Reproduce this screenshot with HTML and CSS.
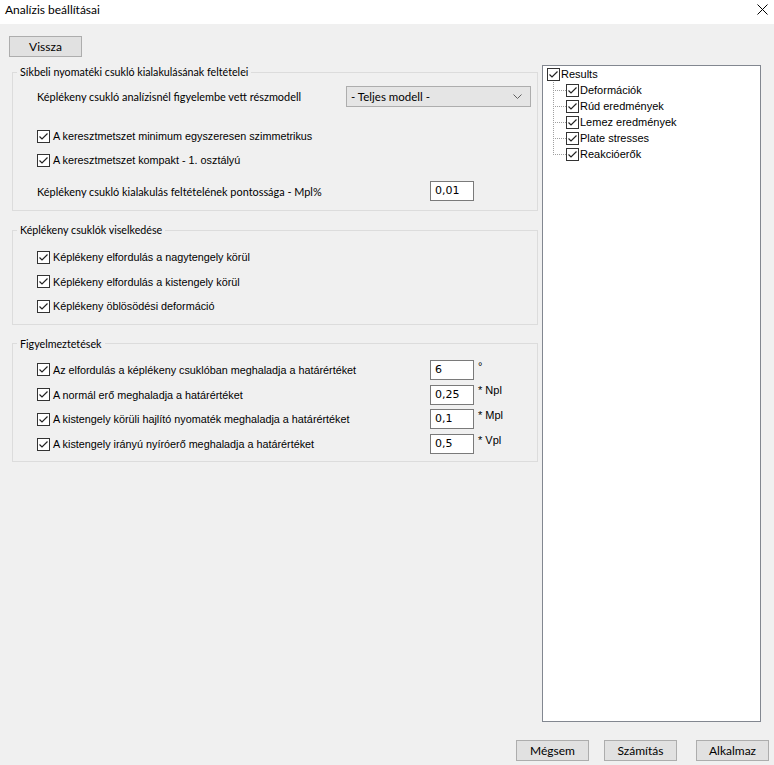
FILE: index.html
```html
<!DOCTYPE html>
<html>
<head>
<meta charset="utf-8">
<link rel="stylesheet" href="styles.css">
</head>
<body>
<div class="window">
  <div class="titlebar">
    <span class="title">Analízis beállításai</span>
    <svg class="close" width="11" height="11" viewBox="0 0 11 11"><path d="M0.5 0.5 L10.5 10.5 M10.5 0.5 L0.5 10.5" stroke="#000" stroke-width="1" fill="none"/></svg>
  </div>
  <div class="client">
    <div class="top">
      <div class="left">
        <button class="btn back">Vissza</button>

        <fieldset class="group g1">
          <legend>Síkbeli nyomatéki csukló kialakulásának feltételei</legend>
          <div class="row r-combo">
            <span class="label">Képlékeny csukló analízisnél figyelembe vett részmodell</span>
            <div class="combo"><span>- Teljes modell -</span>
              <svg width="9" height="5" viewBox="0 0 9 5"><path d="M0.5 0.5 L4.5 4.5 L8.5 0.5" stroke="#606060" fill="none"/></svg>
            </div>
          </div>
          <label class="row chk r-c1"><span class="box"><svg width="13" height="13" viewBox="0 0 13 13"><rect x="0.5" y="0.5" width="12" height="12" fill="#fff" stroke="#333"/><path d="M2.5 6.5 L5 9 L10.5 3.5" stroke="#222" stroke-width="1.2" fill="none"/></svg></span><span class="ct">A keresztmetszet minimum egyszeresen szimmetrikus</span></label>
          <label class="row chk"><span class="box"><svg width="13" height="13" viewBox="0 0 13 13"><rect x="0.5" y="0.5" width="12" height="12" fill="#fff" stroke="#333"/><path d="M2.5 6.5 L5 9 L10.5 3.5" stroke="#222" stroke-width="1.2" fill="none"/></svg></span><span class="ct">A keresztmetszet kompakt - 1. osztályú</span></label>
          <div class="row r-prec">
            <span class="label">Képlékeny csukló kialakulás feltételének pontossága - Mpl%</span>
            <span class="input">0,01</span>
          </div>
        </fieldset>

        <fieldset class="group g2">
          <legend>Képlékeny csuklók viselkedése</legend>
          <label class="row chk"><span class="box"><svg width="13" height="13" viewBox="0 0 13 13"><rect x="0.5" y="0.5" width="12" height="12" fill="#fff" stroke="#333"/><path d="M2.5 6.5 L5 9 L10.5 3.5" stroke="#222" stroke-width="1.2" fill="none"/></svg></span><span class="ct">Képlékeny elfordulás a nagytengely körül</span></label>
          <label class="row chk"><span class="box"><svg width="13" height="13" viewBox="0 0 13 13"><rect x="0.5" y="0.5" width="12" height="12" fill="#fff" stroke="#333"/><path d="M2.5 6.5 L5 9 L10.5 3.5" stroke="#222" stroke-width="1.2" fill="none"/></svg></span><span class="ct">Képlékeny elfordulás a kistengely körül</span></label>
          <label class="row chk"><span class="box"><svg width="13" height="13" viewBox="0 0 13 13"><rect x="0.5" y="0.5" width="12" height="12" fill="#fff" stroke="#333"/><path d="M2.5 6.5 L5 9 L10.5 3.5" stroke="#222" stroke-width="1.2" fill="none"/></svg></span><span class="ct">Képlékeny öblösödési deformáció</span></label>
        </fieldset>

        <fieldset class="group g3">
          <legend>Figyelmeztetések</legend>
          <div class="row warn">
            <label class="chk"><span class="box"><svg width="13" height="13" viewBox="0 0 13 13"><rect x="0.5" y="0.5" width="12" height="12" fill="#fff" stroke="#333"/><path d="M2.5 6.5 L5 9 L10.5 3.5" stroke="#222" stroke-width="1.2" fill="none"/></svg></span><span class="ct">Az elfordulás a képlékeny csuklóban meghaladja a határértéket</span></label>
            <span class="input">6</span><span class="unit">°</span>
          </div>
          <div class="row warn">
            <label class="chk"><span class="box"><svg width="13" height="13" viewBox="0 0 13 13"><rect x="0.5" y="0.5" width="12" height="12" fill="#fff" stroke="#333"/><path d="M2.5 6.5 L5 9 L10.5 3.5" stroke="#222" stroke-width="1.2" fill="none"/></svg></span><span class="ct">A normál erő meghaladja a határértéket</span></label>
            <span class="input">0,25</span><span class="unit">* Npl</span>
          </div>
          <div class="row warn">
            <label class="chk"><span class="box"><svg width="13" height="13" viewBox="0 0 13 13"><rect x="0.5" y="0.5" width="12" height="12" fill="#fff" stroke="#333"/><path d="M2.5 6.5 L5 9 L10.5 3.5" stroke="#222" stroke-width="1.2" fill="none"/></svg></span><span class="ct">A kistengely körüli hajlító nyomaték meghaladja a határértéket</span></label>
            <span class="input">0,1</span><span class="unit">* Mpl</span>
          </div>
          <div class="row warn">
            <label class="chk"><span class="box"><svg width="13" height="13" viewBox="0 0 13 13"><rect x="0.5" y="0.5" width="12" height="12" fill="#fff" stroke="#333"/><path d="M2.5 6.5 L5 9 L10.5 3.5" stroke="#222" stroke-width="1.2" fill="none"/></svg></span><span class="ct">A kistengely irányú nyíróerő meghaladja a határértéket</span></label>
            <span class="input">0,5</span><span class="unit">* Vpl</span>
          </div>
        </fieldset>
      </div>

      <div class="tree">
        <div class="node root"><span class="box"><svg width="13" height="13" viewBox="0 0 13 13"><rect x="0.5" y="0.5" width="12" height="12" fill="#fff" stroke="#333"/><path d="M2.5 6.5 L5 9 L10.5 3.5" stroke="#222" stroke-width="1.2" fill="none"/></svg></span><span class="tt">Results</span></div>
        <div class="children">
          <div class="node child"><span class="box"><svg width="13" height="13" viewBox="0 0 13 13"><rect x="0.5" y="0.5" width="12" height="12" fill="#fff" stroke="#333"/><path d="M2.5 6.5 L5 9 L10.5 3.5" stroke="#222" stroke-width="1.2" fill="none"/></svg></span><span class="tt">Deformációk</span></div>
          <div class="node child"><span class="box"><svg width="13" height="13" viewBox="0 0 13 13"><rect x="0.5" y="0.5" width="12" height="12" fill="#fff" stroke="#333"/><path d="M2.5 6.5 L5 9 L10.5 3.5" stroke="#222" stroke-width="1.2" fill="none"/></svg></span><span class="tt">Rúd eredmények</span></div>
          <div class="node child"><span class="box"><svg width="13" height="13" viewBox="0 0 13 13"><rect x="0.5" y="0.5" width="12" height="12" fill="#fff" stroke="#333"/><path d="M2.5 6.5 L5 9 L10.5 3.5" stroke="#222" stroke-width="1.2" fill="none"/></svg></span><span class="tt">Lemez eredmények</span></div>
          <div class="node child"><span class="box"><svg width="13" height="13" viewBox="0 0 13 13"><rect x="0.5" y="0.5" width="12" height="12" fill="#fff" stroke="#333"/><path d="M2.5 6.5 L5 9 L10.5 3.5" stroke="#222" stroke-width="1.2" fill="none"/></svg></span><span class="tt">Plate stresses</span></div>
          <div class="node child last"><span class="box"><svg width="13" height="13" viewBox="0 0 13 13"><rect x="0.5" y="0.5" width="12" height="12" fill="#fff" stroke="#333"/><path d="M2.5 6.5 L5 9 L10.5 3.5" stroke="#222" stroke-width="1.2" fill="none"/></svg></span><span class="tt">Reakcióerők</span></div>
        </div>
      </div>
    </div>
    <div class="footer">
      <button class="btn">Mégsem</button>
      <button class="btn b2">Számítás</button>
      <button class="btn b3">Alkalmaz</button>
    </div>
  </div>
</div>
</body>
</html>
```

FILE: styles.css
```css
* { box-sizing: border-box; }
html, body { margin: 0; padding: 0; }
body {
  width: 774px;
  height: 765px;
  background: #f0f0f0;
  font-family: Lato, "Liberation Sans", sans-serif;
  font-size: 10.9px;
  color: #000;
  overflow: hidden;
}
.window { width: 774px; height: 765px; display: flex; flex-direction: column; }
.titlebar {
  height: 24px;
  background: #fff;
  display: flex;
  align-items: center;
  padding: 0 6px 6px 5px;
}
.title { font-size: 12px; }
.close { margin-left: auto; }
.client { flex: 1; display: flex; flex-direction: column; }
.top { display: flex; }
.left { width: 538px; padding-left: 9px; }
.btn {
  height: 21px;
  width: 73px;
  background: #e1e1e1;
  border: 1px solid #adadad;
  font-family: Lato, "Liberation Sans", sans-serif;
  font-size: 12px;
  color: #000;
  padding: 0;
  line-height: 18px;
}
.back { margin-top: 12px; display: block; }

.group {
  margin: 0 0 0 3px;
  width: 526px;
  border: 1px solid #dcdcdc;
  padding: 0 0 0 24px;
  min-width: 0;
}
.group legend {
  padding: 0 3px 0 3px;
  margin-left: -20px;
  font-size: 10.7px;
  line-height: 16px;
}
.g1 { margin-top: 7px; padding-bottom: 7px; }
.g2 { margin-top: 11px; padding-bottom: 5px; }
.g3 { margin-top: 11px; padding-bottom: 4px; }

.row { display: flex; align-items: center; }
.r-combo { margin-top: 6px; height: 21px; }
.label { width: 309px; }
.combo {
  width: 185px;
  height: 21px;
  background: #e5e5e5;
  border: 1px solid #adadad;
  display: flex;
  align-items: center;
  justify-content: space-between;
  padding: 0 8px 0 4px;
  font-size: 11.5px;
}
.chk { height: 24px; display: flex; align-items: center; }
.r-c1 { margin-top: 17px; }
.box { width: 13px; height: 13px; display: block; margin-right: 3px; flex: none; }
.box svg { display: block; }
.ct {
  font-family: "Liberation Sans", Arial, sans-serif;
  font-size: 10.8px;
}
.r-prec { margin-top: 7px; height: 24px; }
.r-prec .label { width: 393px; }
.input {
  width: 44px;
  height: 20px;
  background: #fff;
  border: 1px solid #7a7a7a;
  padding-left: 4px;
  font-family: "DejaVu Sans", sans-serif;
  font-size: 11px;
  line-height: 18px;
}
.g2 .chk { height: 24.5px; }
.g2 legend + .chk { margin-top: 7px; }
.warn { height: 24.8px; }
.g3 legend + .warn { margin-top: 6px; }
.warn .chk { width: 393px; height: 24.8px; }
.unit {
  margin-left: 4px;
  font-family: "Liberation Sans", Arial, sans-serif;
  font-size: 11px;
  align-self: flex-start;
  margin-top: 2px;
}

.tree {
  margin-top: 41px;
  margin-left: 4px;
  width: 219px;
  height: 657px;
  background: #fff;
  border: 1px solid #828790;
  padding: 0 0 0 4px;
  font-family: "Liberation Sans", Arial, sans-serif;
  font-size: 11px;
}
.node { height: 16px; display: flex; align-items: center; }
.node .box { margin-right: 1px; }
.children { margin-left: 6px; }
.child {
  padding-left: 13px;
  background-image:
    repeating-linear-gradient(to right, #a0a0a0 0 1px, transparent 1px 2px),
    repeating-linear-gradient(to bottom, #a0a0a0 0 1px, transparent 1px 2px);
  background-size: 13px 1px, 1px 16px;
  background-position: 0 8px, 0 0;
  background-repeat: no-repeat, no-repeat;
}
.child.last { background-size: 13px 1px, 1px 9px; }
.footer {
  display: flex;
  padding-left: 516px;
  margin-top: 18px;
}
.b2 { margin-left: 15px; }
.b3 { margin-left: 19px; }
```
